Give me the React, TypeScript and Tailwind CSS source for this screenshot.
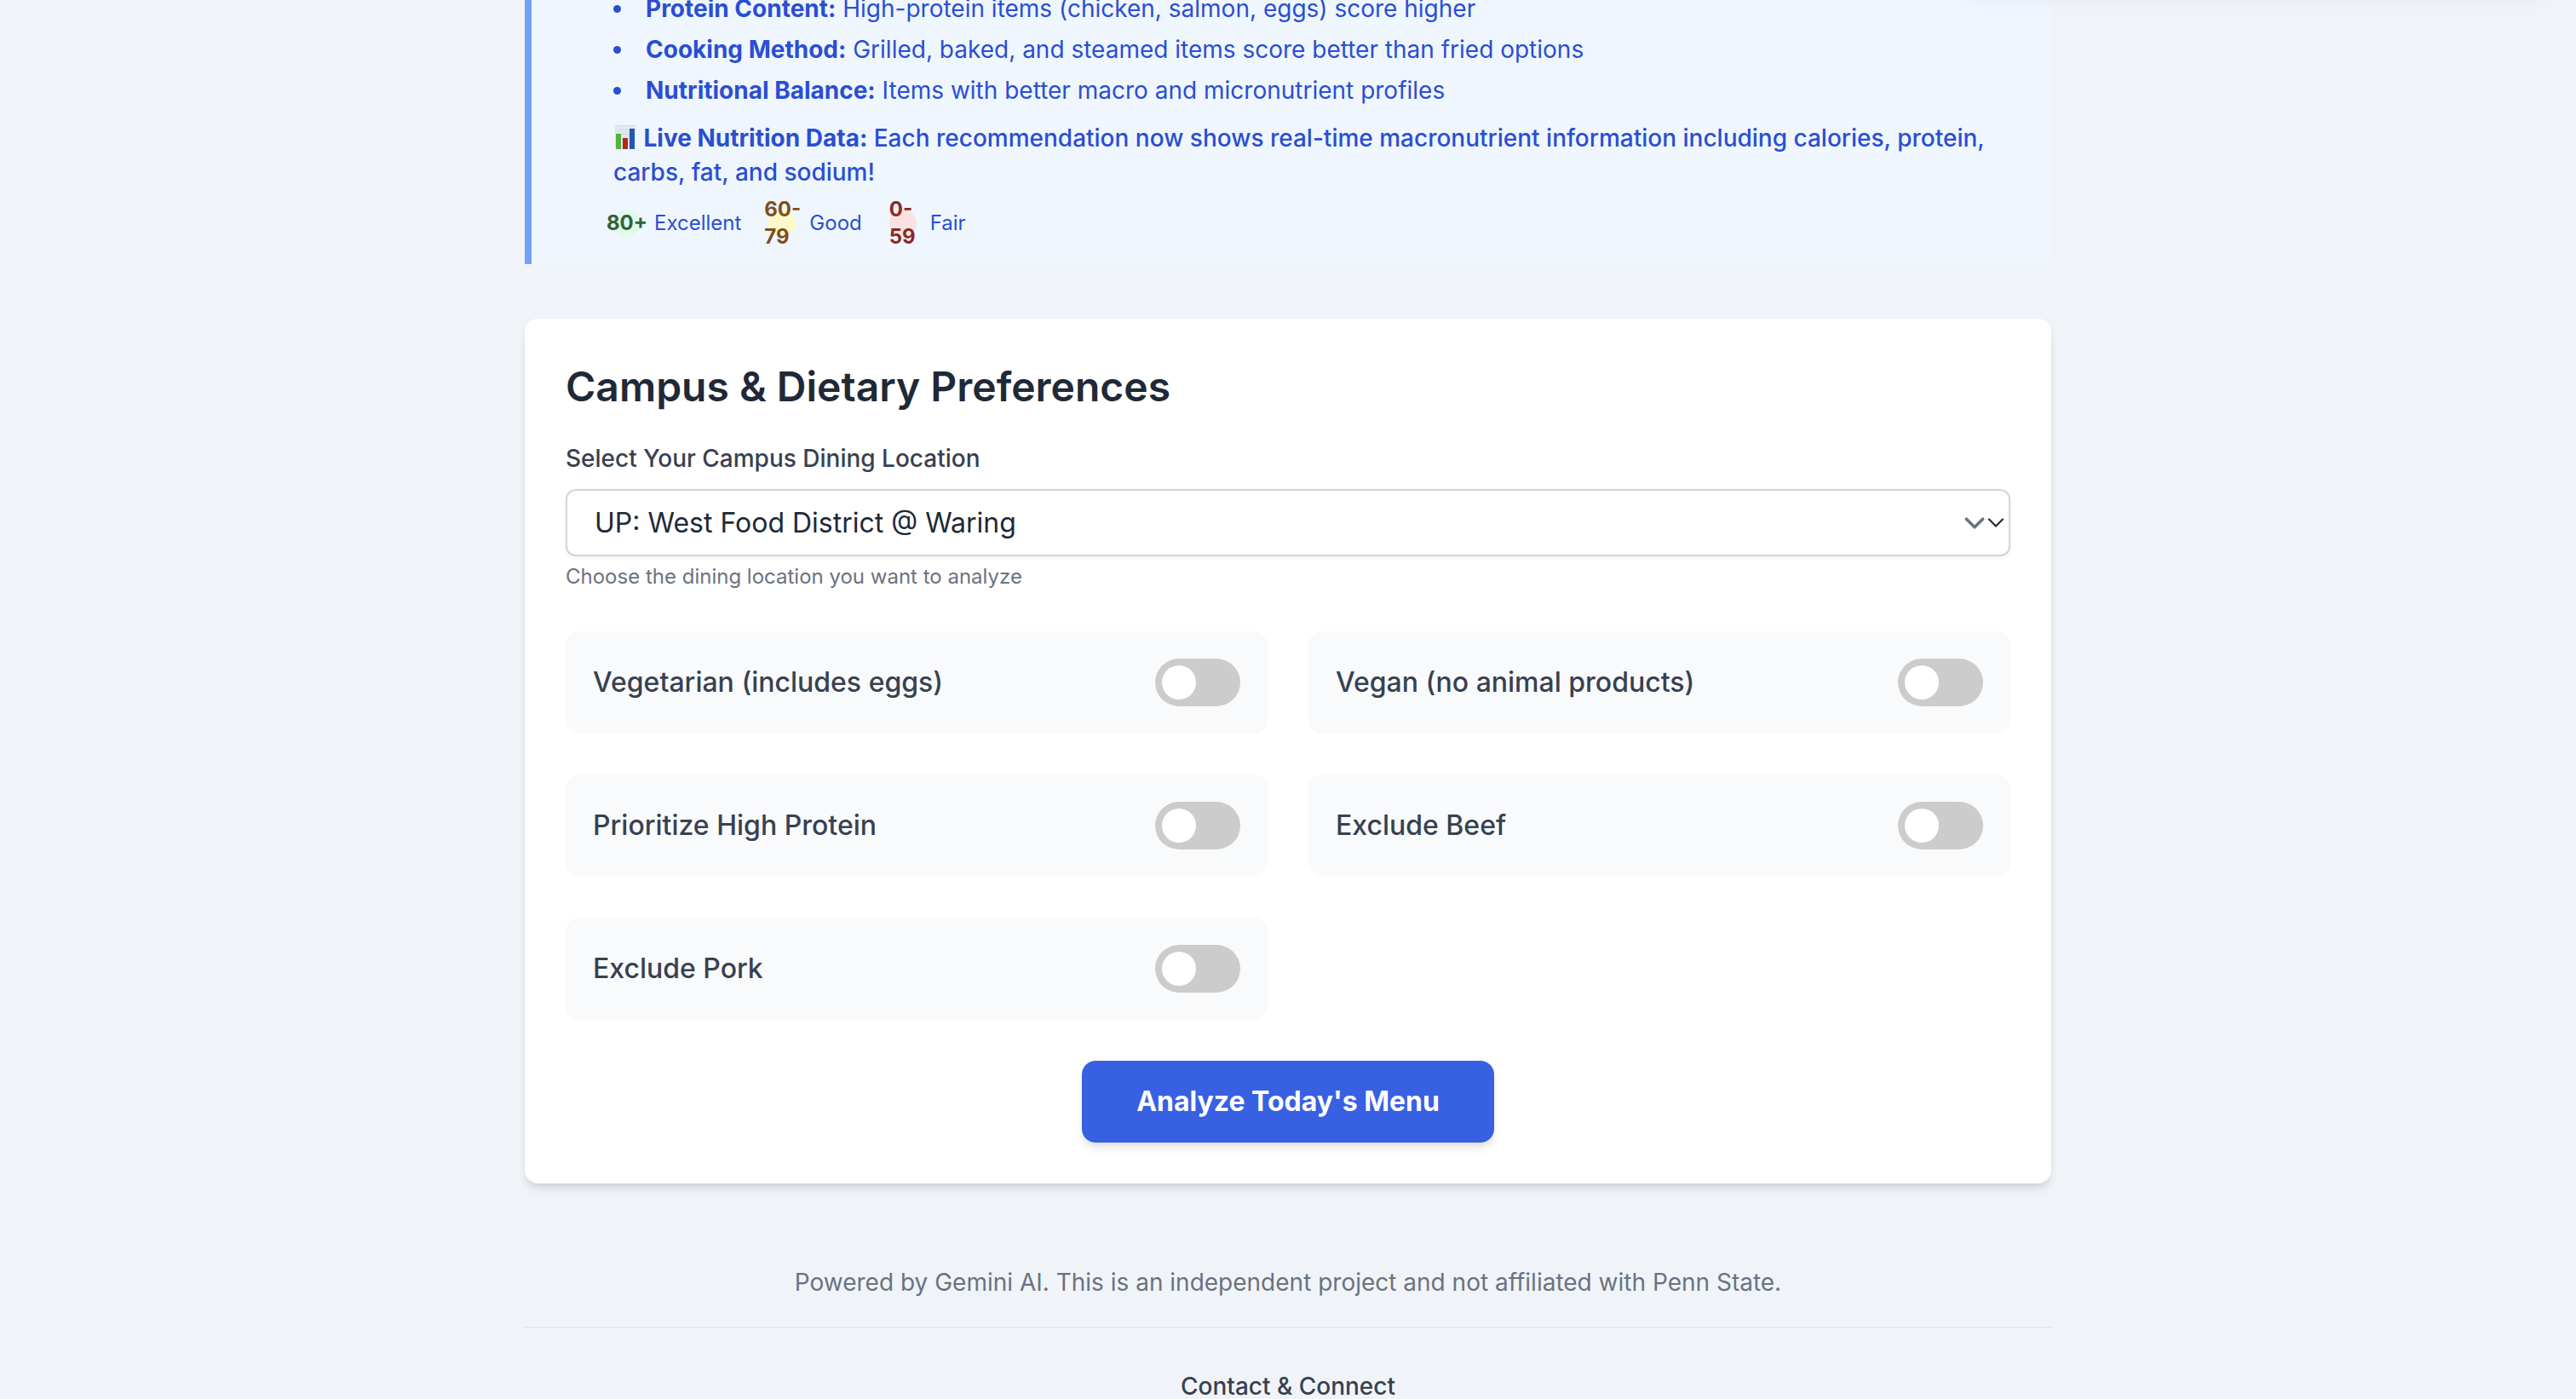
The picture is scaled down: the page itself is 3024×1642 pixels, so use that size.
import { useState } from "react";

const factors = [
  { name: "Protein Content:", text: "High-protein items (chicken, salmon, eggs) score higher" },
  { name: "Cooking Method:", text: "Grilled, baked, and steamed items score better than fried options" },
  { name: "Nutritional Balance:", text: "Items with better macro and micronutrient profiles" },
];

const scores = [
  { range: "80+", label: "Excellent", style: "bg-[#e0fbe8] text-[#2f6339]" },
  { range: "60-79", label: "Good", style: "bg-[#fef9c8] text-[#7e4e1d]" },
  { range: "0-59", label: "Fair", style: "bg-[#f9e2e1] text-[#8c2822]" },
];

const preferences = [
  { id: "vegetarian", label: "Vegetarian (includes eggs)" },
  { id: "vegan", label: "Vegan (no animal products)" },
  { id: "high-protein", label: "Prioritize High Protein" },
  { id: "exclude-beef", label: "Exclude Beef" },
  { id: "exclude-pork", label: "Exclude Pork" },
];

const cardShadow = "shadow-[0_8px_12px_-2px_rgba(0,0,0,0.1),0_4px_8px_-4px_rgba(0,0,0,0.1)]";

function ChartIcon() {
  return (
    <svg viewBox="0 0 28 28" className="inline-block size-7 align-[-3px]" aria-hidden="true">
      <rect x="2" y="0" width="24" height="28" fill="#e0e8f0" />
      <path d="M2 .5h24M2 5.5h24M2 10.5h24M2 15.5h24" stroke="#d3dbe4" strokeWidth="1" />
      <rect x="3" y="10" width="6" height="18" fill="#52b43a" />
      <rect x="11" y="15" width="6" height="13" fill="#b3261c" />
      <rect x="19" y="4" width="6" height="24" fill="#2458b0" />
    </svg>
  );
}

function ScoringInfo() {
  return (
    <section className="rounded-r-2xl border-l-8 border-[#72a2f5] bg-[#eff6fe] pb-8 pl-24 pr-8 text-[28px] leading-10 text-[#2a4ed3]">
      <ul className="-mt-2.5 flex list-inside list-disc flex-col gap-2">
        {factors.map((f) => (
          <li key={f.name}>
            <strong className="font-bold">{f.name}</strong> {f.text}
          </li>
        ))}
      </ul>
      <p className="mt-4 font-medium">
        <ChartIcon /> <strong className="font-bold">Live Nutrition Data:</strong> Each recommendation now shows
        real-time macronutrient information including calories, protein, carbs, fat, and sodium!
      </p>
      <div className="mt-6 flex gap-8 text-2xl leading-8">
        {scores.map((s) => (
          <div key={s.label} className="flex items-center gap-4">
            <span className={`flex size-8 items-center justify-center rounded-full font-bold ${s.style}`}>
              <span>{s.range}</span>
            </span>
            <span>{s.label}</span>
          </div>
        ))}
      </div>
    </section>
  );
}

function LocationSelect() {
  return (
    <div>
      <label htmlFor="campus" className="block text-[28px] font-medium leading-10 text-[#374151]">
        Select Your Campus Dining Location
      </label>
      <div className="relative mt-4">
        <select
          id="campus"
          className="block h-[79px] w-full appearance-none rounded-xl border-2 border-[#d1d5db] bg-white pl-8 pr-20 text-[32px] text-[#1f2937] shadow-[0_2px_4px_rgba(0,0,0,0.05)]"
        >
          <option>UP: West Food District @ Waring</option>
        </select>
        <svg
          viewBox="0 0 64 48"
          className="pointer-events-none absolute inset-y-0 right-0.5 my-auto h-12 w-16"
          fill="none"
          strokeLinecap="round"
          strokeLinejoin="round"
          aria-hidden="true"
        >
          <path d="M14.4 19.2l9.6 9.6 9.6-9.6" stroke="#6b7280" strokeWidth="3.6" />
          <path d="M41 19.5l8 8 8-8" stroke="#1f2937" strokeWidth="2.2" />
        </svg>
      </div>
      <p className="mt-2 text-2xl leading-8 text-[#6b7280]">Choose the dining location you want to analyze</p>
    </div>
  );
}

function Toggle({ id, label }: { id: string; label: string }) {
  const [on, setOn] = useState(false);
  return (
    <div className="flex items-center justify-between rounded-2xl bg-[#f9fafb] p-8">
      <label htmlFor={id} className="text-[32px] font-medium leading-[48px] text-[#374151]">
        {label}
      </label>
      <input
        id={id}
        type="checkbox"
        role="switch"
        checked={on}
        onChange={() => setOn(!on)}
        className="h-14 w-[100px] shrink-0 cursor-pointer appearance-none rounded-full bg-[#ccc] p-2 before:block before:size-10 before:rounded-full before:bg-white before:transition-transform checked:bg-[#3860e2] checked:before:translate-x-11"
      />
    </div>
  );
}

export default function App() {
  return (
    <div className="relative flex h-screen justify-center overflow-hidden bg-[#f0f4f8] font-['Inter',sans-serif]">
      <div className="absolute -top-14 right-8 h-8 w-[688px] rounded-2xl shadow-[0_20px_30px_-6px_rgba(0,0,0,0.1),0_8px_12px_-8px_rgba(0,0,0,0.1)]" />
      <div className="w-full max-w-[1792px]">
        <main className="flex flex-col gap-16">
          <ScoringInfo />
          <section className={`rounded-2xl bg-white p-12 ${cardShadow}`}>
            <h2 className="mb-8 text-5xl font-semibold leading-[64px] text-[#1f2937]">
              Campus &amp; Dietary Preferences
            </h2>
            <LocationSelect />
            <div className="mt-12 grid grid-cols-2 gap-12">
              {preferences.map((p) => (
                <Toggle key={p.id} id={p.id} label={p.label} />
              ))}
            </div>
            <div className="mt-12 flex justify-center">
              <button
                type="button"
                className={`rounded-2xl bg-[#3860e2] px-16 py-6 text-[32px] font-bold leading-[48px] text-white ${cardShadow}`}
              >
                Analyze Today's Menu
              </button>
            </div>
          </section>
        </main>
        <footer className="mt-24 text-center text-[28px] leading-10 text-[#6b7280]">
          <p>Powered by Gemini AI. This is an independent project and not affiliated with Penn State.</p>
          <div className="mt-8 border-t-2 border-[#e5e7eb] pt-12">
            <h3 className="font-medium text-[#374151]">Contact &amp; Connect</h3>
          </div>
        </footer>
      </div>
    </div>
  );
}
